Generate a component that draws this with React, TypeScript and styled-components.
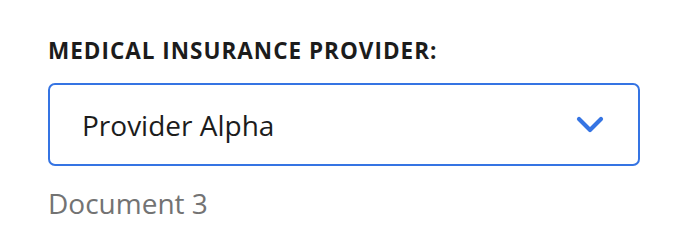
import React from "react";
import styled, { createGlobalStyle } from "styled-components";

const GlobalStyle = createGlobalStyle`
  html, body {
    margin: 0;
    padding: 0;
    background: #ffffff;
    font-family: "Open Sans", "Liberation Sans", sans-serif;
  }
`;

const Page = styled.div`
  padding: 36px 50px 0 48px;
`;

const Field = styled.div`
  display: flex;
  flex-direction: column;
  width: 592px;
`;

const Label = styled.label`
  font-size: 22.5px;
  font-weight: 700;
  color: #1c1c1c;
  line-height: 30px;
  letter-spacing: 1px;
  margin-bottom: 17px;
`;

const SelectBox = styled.div`
  display: flex;
  align-items: center;
  justify-content: space-between;
  height: 83px;
  box-sizing: border-box;
  border: 2px solid #3574e3;
  border-radius: 7px;
  padding: 0 34px 0 32px;
`;

const Value = styled.span`
  font-size: 28px;
  color: #1c1c1c;
  line-height: 38px;
`;

const Helper = styled.div`
  margin-top: 18px;
  font-size: 28px;
  line-height: 38px;
  color: #737373;
`;

const Chevron = () => (
  <svg width="28" height="18" viewBox="0 0 28 18" fill="none">
    <path
      d="M3 3L14 14L25 3"
      stroke="#3574e3"
      strokeWidth="4.2"
      strokeLinecap="round"
      strokeLinejoin="round"
    />
  </svg>
);

export default function App() {
  return (
    <>
      <GlobalStyle />
      <Page>
        <Field>
          <Label>MEDICAL INSURANCE PROVIDER:</Label>
          <SelectBox>
            <Value>Provider Alpha</Value>
            <Chevron />
          </SelectBox>
          <Helper>Document 3</Helper>
        </Field>
      </Page>
    </>
  );
}
